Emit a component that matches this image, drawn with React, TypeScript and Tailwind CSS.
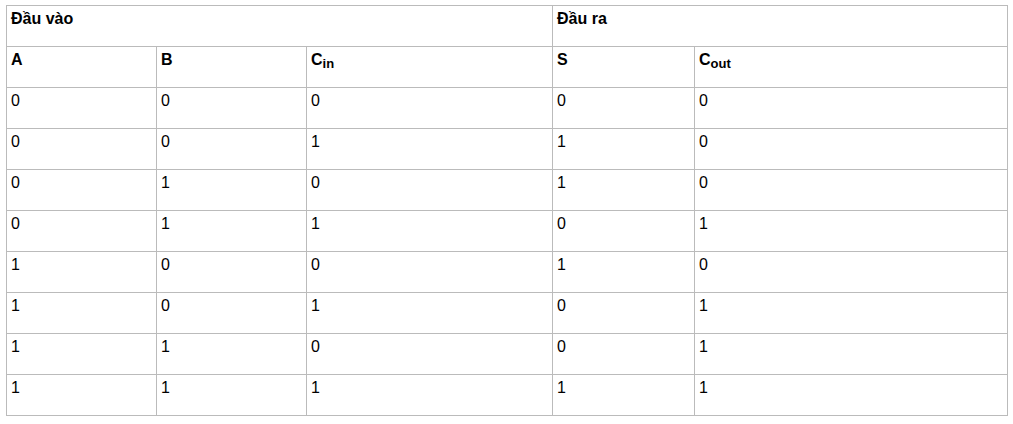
const rows = [
  ["0", "0", "0", "0", "0"],
  ["0", "0", "1", "1", "0"],
  ["0", "1", "0", "1", "0"],
  ["0", "1", "1", "0", "1"],
  ["1", "0", "0", "1", "0"],
  ["1", "0", "1", "0", "1"],
  ["1", "1", "0", "0", "1"],
  ["1", "1", "1", "1", "1"],
]

const cell = "border border-[#bbbbbb] h-[41px] px-[4px] pt-[1px] align-top text-left"

export default function App() {
  return (
    <div className="min-h-screen bg-white pt-[5px] pl-[6px] font-['Liberation_Sans',Arial,sans-serif] text-[16px] text-black">
      <table className="table-fixed border-collapse w-[1002px]">
        <colgroup>
          <col className="w-[150px]" />
          <col className="w-[150px]" />
          <col className="w-[246px]" />
          <col className="w-[142px]" />
          <col className="w-[313px]" />
        </colgroup>
        <tbody>
          <tr>
            <th colSpan={3} className={`${cell} font-bold`}>Đầu vào</th>
            <th colSpan={2} className={`${cell} font-bold`}>Đầu ra</th>
          </tr>
          <tr>
            <th className={`${cell} font-bold`}>A</th>
            <th className={`${cell} font-bold`}>B</th>
            <th className={`${cell} font-bold`}>
              C<sub className="text-[13px]">in</sub>
            </th>
            <th className={`${cell} font-bold`}>S</th>
            <th className={`${cell} font-bold`}>
              C<sub className="text-[13px]">out</sub>
            </th>
          </tr>
          {rows.map((r, i) => (
            <tr key={i}>
              {r.map((v, j) => (
                <td key={j} className={cell}>{v}</td>
              ))}
            </tr>
          ))}
        </tbody>
      </table>
    </div>
  )
}
